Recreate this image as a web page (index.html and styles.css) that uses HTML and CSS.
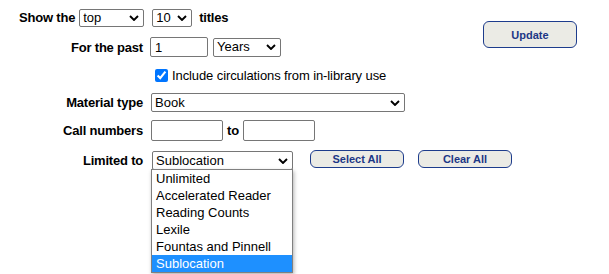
FILE: index.html
```html
<!DOCTYPE html>
<html>
<head>
<meta charset="utf-8">
<link rel="stylesheet" href="styles.css">
</head>
<body>
<form class="report">
  <div class="row-show">
    <span class="lbl">Show the</span>
    <span class="sel sel-top"><select class="ctl"><option>top</option><option>bottom</option></select><svg class="chev" viewBox="0 0 10 6"><path d="M1 1l4 4 4-4"/></svg></span>
    <span class="sel sel-num"><select class="ctl"><option>10</option><option>25</option></select><svg class="chev" viewBox="0 0 10 6"><path d="M1 1l4 4 4-4"/></svg></span>
    <span class="lbl">titles</span>
  </div>
  <div class="side">
    <button type="button" class="btn btn-update">Update</button>
  </div>

  <label class="lbl cell-label r2">For the past</label>
  <div class="cell r2 past">
    <input class="ctl txt txt-past" type="text" value="1">
    <span class="sel sel-years"><select class="ctl"><option>Years</option><option>Months</option></select><svg class="chev" viewBox="0 0 10 6"><path d="M1 1l4 4 4-4"/></svg></span>
  </div>

  <div class="cell r3 check">
    <input type="checkbox" class="cb" checked>
    <span class="plain">Include circulations from in-library use</span>
  </div>

  <label class="lbl cell-label r4">Material type</label>
  <div class="cell r4">
    <span class="sel sel-material"><select class="ctl"><option>Book</option></select><svg class="chev" viewBox="0 0 10 6"><path d="M1 1l4 4 4-4"/></svg></span>
  </div>

  <label class="lbl cell-label r5">Call numbers</label>
  <div class="cell r5 calls">
    <input class="ctl txt txt-call" type="text">
    <span class="lbl to">to</span>
    <input class="ctl txt txt-call" type="text">
  </div>

  <label class="lbl cell-label r6">Limited to</label>
  <div class="cell r6 limited">
    <span class="sel sel-limited">
      <select class="ctl"><option>Sublocation</option></select><svg class="chev" viewBox="0 0 10 6"><path d="M1 1l4 4 4-4"/></svg>
      <ul class="popup">
        <li>Unlimited</li>
        <li>Accelerated Reader</li>
        <li>Reading Counts</li>
        <li>Lexile</li>
        <li>Fountas and Pinnell</li>
        <li class="active">Sublocation</li>
      </ul>
    </span>
    <button type="button" class="btn btn-small btn-select">Select All</button>
    <button type="button" class="btn btn-small">Clear All</button>
  </div>
</form>
</body>
</html>
```

FILE: styles.css
```css
html {
  height: 100%;
}

html, body {
  margin: 0;
  padding: 0;
  background: #ffffff;
}

body {
  min-height: 100%;
  font-family: "Liberation Sans", Arial, sans-serif;
  font-size: 13px;
  color: #000;
}

.report {
  display: grid;
  grid-template-columns: 143px 324px 94px;
  grid-template-rows: 29px 30px 27px 27px 29px 30px;
  column-gap: 8px;
  padding-top: 3px;
  min-height: 271px;
  align-content: start;
}

.lbl {
  font-weight: bold;
  white-space: nowrap;
  letter-spacing: -0.2px;
}

.plain {
  white-space: nowrap;
  letter-spacing: -0.1px;
}

.row-show {
  grid-column: 1 / 3;
  grid-row: 1;
  display: flex;
  align-items: center;
  padding-left: 19px;
}

.side {
  grid-column: 3;
  grid-row: 1 / span 2;
  padding-top: 18px;
}

.cell-label {
  grid-column: 1;
  display: flex;
  align-items: center;
  justify-content: flex-end;
}

.cell {
  grid-column: 2;
  display: flex;
  align-items: center;
}

.r2 { grid-row: 2; }
.r3 { grid-row: 3; }
.r4 { grid-row: 4; }
.r5 { grid-row: 5; }
.r6 { grid-row: 6; }

.limited {
  grid-column: 2 / 4;
  align-items: flex-start;
  padding-top: 6px;
}

/* form controls */
.ctl {
  font-family: "Liberation Sans", Arial, sans-serif;
  font-size: 13px;
  color: #000;
  border: 1px solid #767676;
  border-radius: 2px;
  background: #fff;
  margin: 0;
  box-sizing: border-box;
}

.sel {
  position: relative;
  display: inline-block;
}

.sel select {
  -webkit-appearance: none;
  appearance: none;
  display: block;
  width: 100%;
  height: 100%;
  padding: 0 0 0 3px;
  line-height: 16px;
}

.chev {
  position: absolute;
  right: 5px;
  top: 50%;
  width: 10px;
  height: 6px;
  margin-top: -3px;
  pointer-events: none;
}

.chev path {
  fill: none;
  stroke: #000;
  stroke-width: 1.9;
}

.sel-top {
  width: 65px;
  height: 18px;
  margin-left: 4px;
}

.sel-num {
  width: 40px;
  height: 18px;
  margin-left: 8px;
  margin-right: 7px;
}

.txt {
  padding: 0 0 0 4px;
  outline: none;
}

.txt-past {
  width: 58px;
  height: 20px;
  margin-left: -1px;
}

.sel-years {
  width: 68px;
  height: 19px;
  margin-left: 5px;
}

.check .cb {
  width: 13px;
  height: 13px;
  margin: 0 4px 0 4px;
  accent-color: #0075ff;
}

.sel-material {
  width: 254px;
  height: 19px;
}

.txt-call {
  width: 72px;
  height: 21px;
}

.to {
  margin: 0 4px;
}

.sel-limited {
  width: 141px;
  height: 19px;
  margin-left: 1px;
}

.popup {
  position: absolute;
  left: -1px;
  top: 18px;
  width: 142px;
  margin: 0;
  padding: 0;
  list-style: none;
  background: #fff;
  border: 1px solid #808080;
  box-shadow: 1px 2px 4px rgba(0, 0, 0, 0.3);
  box-sizing: border-box;
  z-index: 5;
}

.popup li {
  height: 17px;
  line-height: 17px;
  padding-left: 4px;
  white-space: nowrap;
}

.popup li.active {
  background: #1e90ff;
  color: #fff;
}

/* buttons */
.btn {
  font-family: "Liberation Sans", Arial, sans-serif;
  font-weight: bold;
  font-size: 11px;
  color: #1c3786;
  background: #ebebe5;
  border: 1px solid #1d3c8c;
  border-radius: 6px;
  box-sizing: border-box;
  padding: 0;
  margin: 0;
}

.btn-update {
  width: 94px;
  height: 27px;
}

.btn-small {
  width: 94px;
  height: 18px;
  margin-top: -1px;
}

.btn-select {
  margin-left: 17px;
  margin-right: 14px;
}
```
